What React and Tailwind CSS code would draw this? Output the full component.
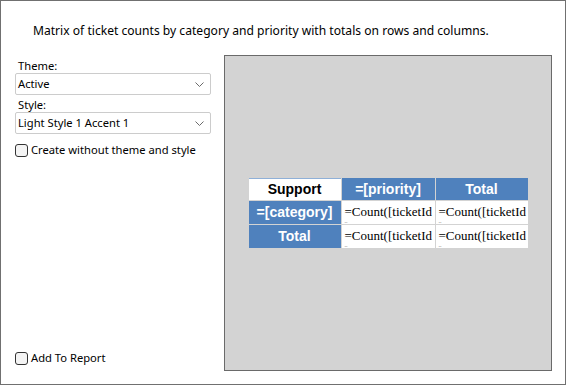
import { useState } from 'react';

function Chevron() {
  return (
    <svg width="9" height="5" viewBox="0 0 9 5" className="shrink-0">
      <path d="M0.5 0.5 L4.5 4.5 L8.5 0.5" fill="none" stroke="#6b6b6b" strokeWidth="1" />
    </svg>
  );
}

function Select({ value }) {
  return (
    <div className="flex items-center justify-between h-[22px] border border-[#cccccc] rounded-[2px] bg-white pl-[2px] pr-[6px]">
      <span className="leading-none">{value}</span>
      <Chevron />
    </div>
  );
}

function Check({ label, checked, onChange }) {
  return (
    <label className="flex items-center gap-[3px] h-[14px] cursor-default">
      <span
        onClick={onChange}
        className="w-[13px] h-[13px] rounded-[3px] border border-[#333333] bg-[#f4f4f4] flex items-center justify-center"
      >
        {checked && <span className="text-[10px] leading-none">✓</span>}
      </span>
      <span className="leading-none">{label}</span>
    </label>
  );
}

function CountCell() {
  return (
    <div className="bg-white overflow-hidden pl-[3px] pt-[3px] font-['Liberation_Serif',serif] text-black">
      <div className="whitespace-nowrap text-[13px] leading-[15px]">=Count([ticketId</div>
      <div className="text-[6px] leading-[5px] text-[#777777]">..</div>
    </div>
  );
}

export default function App() {
  const [noTheme, setNoTheme] = useState(false);
  const [addToReport, setAddToReport] = useState(false);
  const head = "bg-[#4f81bd] text-white font-bold flex items-center justify-center";

  return (
    <div className="w-[566px] h-[385px] border border-[#707070] bg-white flex flex-col font-['Noto_Sans',sans-serif] text-[11.2px] text-black">
      <div className="h-[54px] pl-[32px] pt-[21px] text-[12.1px]">
        Matrix of ticket counts by category and priority with totals on rows and columns.
      </div>

      <div className="flex h-[316px]">
        <div className="w-[196px] ml-[14px] flex flex-col">
          <div className="h-[18px] pl-[3px] flex items-end pb-[2px] leading-none">Theme:</div>
          <Select value="Active" />
          <div className="h-[17px] pl-[3px] flex items-end pb-[2px] leading-none">Style:</div>
          <Select value="Light Style 1 Accent 1" />
          <div className="mt-[9px]">
            <Check label="Create without theme and style" checked={noTheme} onChange={() => setNoTheme(!noTheme)} />
          </div>
          <div className="mt-auto mb-[6px]">
            <Check label="Add To Report" checked={addToReport} onChange={() => setAddToReport(!addToReport)} />
          </div>
        </div>

        <div className="ml-[13px] w-[328px] h-[316px] border border-[#6a6a6a] bg-[#d3d3d3] flex items-center justify-center">
          <div className="grid grid-cols-[92px_93px_92px] grid-rows-[22px_23px_23px] gap-[1px] font-['Liberation_Sans',Arial,sans-serif] text-[14px]">
            <div className="bg-white border-t border-[#8fb0d8] font-bold flex items-center justify-center">Support</div>
            <div className={head}>=[priority]</div>
            <div className={head}>Total</div>
            <div className={head}>=[category]</div>
            <CountCell />
            <CountCell />
            <div className={head}>Total</div>
            <CountCell />
            <CountCell />
          </div>
        </div>
      </div>
    </div>
  );
}
